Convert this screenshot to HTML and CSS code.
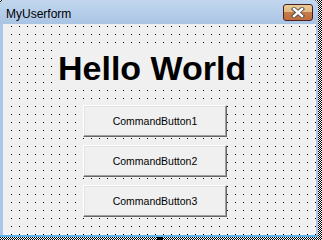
FILE: index.html
```html
<!DOCTYPE html>
<html lang="en">
<head>
    <meta charset="UTF-8">
    <title>MyUserform</title>
    <link rel="stylesheet" href="styles.css">
</head>
<body>
    <div class="window">
        <div class="titlebar">
            <span class="title">MyUserform</span>
            <div class="close">
                <svg width="14" height="11" viewBox="0 0 14 11">
                    <path d="M3 2 L11 9 M11 2 L3 9" stroke="#4a4a4a" stroke-width="4.2" stroke-linecap="square"/>
                    <path d="M3 2 L11 9 M11 2 L3 9" stroke="#fff" stroke-width="2.4" stroke-linecap="square"/>
                </svg>
            </div>
        </div>
        <div class="client">
            <div class="label">Hello World</div>
            <div class="button">CommandButton1</div>
            <div class="button">CommandButton2</div>
            <div class="button">CommandButton3</div>
        </div>
    </div>
    <div class="handle bottom"></div>
</body>
</html>
```
FILE: styles.css
```css
body {
    margin: 0;
    width: 322px;
    height: 240px;
    overflow: hidden;
    position: relative;
    font-family: 'Liberation Sans', Arial, sans-serif;
    background: repeating-conic-gradient(#000 0 25%, #fff 0 50%) 0 0 / 2px 2px;
}
.window {
    width: 318px;
    height: 237px;
    box-sizing: border-box;
    display: flex;
    flex-direction: column;
    background: #a9c7e8;
    border-bottom: 2px solid #5db4e8;
    border-radius: 5px 5px 0 0;
}
.titlebar {
    height: 24px;
    display: flex;
    justify-content: space-between;
    align-items: flex-start;
    padding: 0 5px 0 6px;
    background: linear-gradient(#c2d7ee, #a9c4e3);
    border-radius: 5px 5px 0 0;
}
.title {
    margin-top: 7px;
    font-size: 12px;
    line-height: 14px;
    color: #000;
}
.close {
    margin-top: 4px;
    width: 30px;
    height: 17px;
    box-sizing: border-box;
    border: 1px solid #4a1f1f;
    border-radius: 3px;
    background: linear-gradient(#eccb97 0%, #e2b985 45%, #c67a4a 50%, #c06d3d 100%);
    display: flex;
    align-items: center;
    justify-content: center;
}
.close svg {
    display: block;
}
.client {
    flex: 1;
    margin: 0 2px 0 3px;
    background-color: #f0f0f0;
    background-image:
        linear-gradient(90deg, transparent 1px, #f0f0f0 1px),
        linear-gradient(#000 1px, #f0f0f0 1px);
    background-size: 8px 8px;
    background-position: 0 2px;
    box-shadow: inset 1px 0 #f0f0f0;
    display: flex;
    flex-direction: column;
    align-items: flex-start;
}
.label {
    margin: 22px 0 0 49px;
    width: 198px;
    height: 44px;
    box-sizing: border-box;
    padding: 3px 0 0 6px;
    background: #f0f0f0;
    font-size: 34px;
    font-weight: bold;
    line-height: 38px;
    color: #000;
}
.button {
    margin: 15px 0 0 80px;
    width: 144px;
    height: 32px;
    box-sizing: border-box;
    background: #f0f0f0;
    border: 1px solid;
    border-color: #fff #696969 #696969 #fff;
    box-shadow: inset -1px -1px #a0a0a0, inset 1px 1px #e3e3e3;
    display: flex;
    align-items: center;
    justify-content: center;
    font-size: 10.5px;
    color: #000;
}
.button + .button {
    margin-top: 8px;
}
.handle {
    position: absolute;
    background: #000;
}
.handle.bottom {
    left: 157px;
    top: 237px;
    width: 6px;
    height: 3px;
}
```
